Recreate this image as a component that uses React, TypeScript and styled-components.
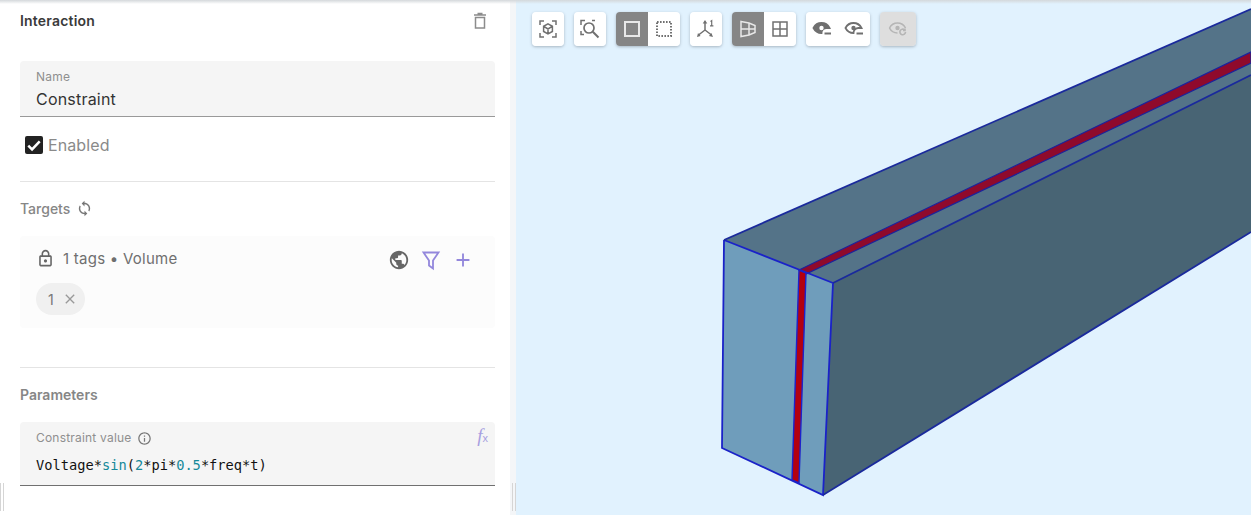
import React from 'react';
import styled, { createGlobalStyle } from 'styled-components';
import { MdAdd, MdClose, MdInfoOutline, MdOutlineLock, MdPublic, MdSync } from 'react-icons/md';

const GlobalStyle = createGlobalStyle`
    html, body {
        margin: 0;
        padding: 0;
        background: #fff;
        font-family: Inter, "Liberation Sans", sans-serif;
    }
`;

const Page = styled.div`
    position: relative;
    display: flex;
    width: 1251px;
    height: 515px;
    overflow: hidden;
`;

const TopShade = styled.div`
    position: absolute;
    top: 0;
    left: 0;
    right: 0;
    height: 4px;
    background: linear-gradient(#d4d8db, rgba(230, 233, 236, 0));
    z-index: 2;
`;

const Panel = styled.aside`
    display: flex;
    flex-direction: column;
    box-sizing: border-box;
    flex: 0 0 510px;
    padding: 0 15px 0 20px;
    background: #fff;
`;

const Gutter = styled.div`
    flex: 0 0 6px;
    background: #f4f6f8;
`;

const Grip = styled.div<{ $left: number }>`
    position: absolute;
    left: ${(p) => p.$left}px;
    top: 483px;
    width: 2px;
    height: 28px;
    border-left: 1px solid #d5d5d5;
    border-right: 1px solid #d5d5d5;
`;

const Header = styled.div`
    display: flex;
    align-items: center;
    justify-content: space-between;
    height: 41px;
    margin-bottom: 20px;
    font-size: 14px;
    font-weight: 600;
    letter-spacing: 0.2px;
    color: #3a3a3a;
    svg {
        width: 18px;
        height: 18px;
        margin-right: 6px;
        color: #8c8c8c;
    }
`;

const Field = styled.div<{ $tall?: boolean }>`
    position: relative;
    box-sizing: border-box;
    height: ${(p) => (p.$tall ? 64 : 56)}px;
    padding: 9px 16px 0;
    background: #f5f5f5;
    border-radius: 4px 4px 0 0;
    border-bottom: 1px solid ${(p) => (p.$tall ? '#707070' : '#999')};
`;

const FieldLabel = styled.div`
    display: flex;
    align-items: center;
    gap: 5px;
    height: 14px;
    font-size: 12px;
    letter-spacing: 0.2px;
    line-height: 14px;
    color: #8f8f8f;
    svg {
        width: 15px;
        height: 15px;
        color: #777;
    }
`;

const NameValue = styled.div`
    margin-top: 5px;
    font-size: 16px;
    letter-spacing: 0.2px;
    line-height: 20px;
    color: #333;
`;

const CheckRow = styled.label`
    display: flex;
    align-items: center;
    gap: 5px;
    height: 18px;
    margin: 19px 0 27px 5px;
    font-size: 16px;
    letter-spacing: 0.1px;
    color: #8a8a8a;
`;

const CheckBox = styled.span`
    display: flex;
    align-items: center;
    justify-content: center;
    width: 18px;
    height: 18px;
    border-radius: 2px;
    background: #222;
    svg {
        width: 16px;
        height: 16px;
    }
`;

const Divider = styled.div`
    height: 1px;
    background: #e4e4e4;
`;

const SectionTitle = styled.div<{ $strong?: boolean }>`
    display: flex;
    align-items: center;
    gap: 6px;
    height: 18px;
    font-size: 14px;
    font-weight: ${(p) => (p.$strong ? 600 : 500)};
    color: #868686;
    svg {
        width: 17px;
        height: 17px;
        color: #777;
    }
`;

const TargetsTitle = styled(SectionTitle)`
    margin: 17px 0 19px;
`;

const ParamsTitle = styled(SectionTitle)`
    margin: 17px 0 19px;
`;

const TargetsBox = styled.div`
    box-sizing: border-box;
    height: 92px;
    padding: 12px 16px 0;
    margin-bottom: 39px;
    background: #fcfcfc;
    border-radius: 4px;
`;

const TargetsRow = styled.div`
    display: flex;
    align-items: center;
    height: 21px;
    font-size: 15px;
    letter-spacing: 0.25px;
    color: #6f6f6f;
`;

const LockIcon = styled(MdOutlineLock)`
    width: 19px;
    height: 19px;
    margin-right: 8px;
    color: #666;
`;

const TargetActions = styled.div`
    display: flex;
    align-items: center;
    gap: 10px;
    margin-left: auto;
    margin-right: 5px;
    transform: translateY(1px);
`;

const ActionSlot = styled.span<{ $accent?: boolean }>`
    display: flex;
    align-items: center;
    justify-content: center;
    width: 22px;
    height: 22px;
    color: ${(p) => (p.$accent ? '#9387dc' : '#666')};
    svg {
        width: 100%;
        height: 100%;
    }
`;

const Chip = styled.div`
    display: inline-flex;
    align-items: center;
    gap: 8px;
    box-sizing: border-box;
    width: 49px;
    height: 32px;
    margin-top: 14px;
    padding-left: 12px;
    border-radius: 16px;
    background: #f0f0f0;
    font-size: 14px;
    color: #777;
    svg {
        width: 16px;
        height: 16px;
        color: #999;
    }
`;

const FxMark = styled.span`
    position: absolute;
    top: 5px;
    right: 7px;
    font-family: "Liberation Serif", serif;
    font-style: italic;
    font-size: 19px;
    line-height: 18px;
    color: #a79fe0;
    sub {
        font-family: "Liberation Sans", sans-serif;
        font-style: normal;
        font-size: 11px;
        vertical-align: baseline;
    }
`;

const CodeLine = styled.div`
    margin-top: 11px;
    font-family: "DejaVu Sans Mono", "Liberation Mono", monospace;
    font-size: 13.7px;
    line-height: 18px;
    color: #111;
    white-space: pre;
`;

const CodeToken = styled.span`
    color: #16899a;
`;

const Viewport = styled.main`
    position: relative;
    flex: 1;
    background: #e1f2fe;
`;

const Scene = styled.svg`
    display: block;
    width: 100%;
    height: 100%;
`;

const Toolbar = styled.div`
    position: absolute;
    top: 12px;
    left: 16px;
    display: flex;
    gap: 10px;
`;

const ToolGroup = styled.div`
    display: flex;
    border-radius: 4px;
    overflow: hidden;
    box-shadow: 0 1px 3px rgba(60, 70, 80, 0.35);
`;

const ToolButton = styled.button<{ $active?: boolean; $off?: boolean; $wide?: boolean }>`
    display: flex;
    align-items: center;
    justify-content: center;
    width: ${(p) => (p.$wide ? 36 : 32)}px;
    height: 34px;
    padding: 0;
    border: 0;
    background: ${(p) => (p.$active ? '#858585' : p.$off ? '#dedede' : '#fff')};
    color: ${(p) => (p.$active ? '#e8e8e8' : p.$off ? '#b5b5b5' : '#707070')};
    svg {
        width: 20px;
        height: 20px;
    }
`;

const line = { fill: 'none', stroke: 'currentColor', strokeWidth: 1.5 };

const Corners = () => (
    <path {...line} d="M2 6V2h4M14 2h4v4M18 14v4h-4M6 18H2v-4" />
);

const ZoomFitIcon = () => (
    <svg viewBox="0 0 20 20">
        <Corners />
        <path {...line} d="M10 4.800l4.400 2.500v5.200L10 15l-4.400-2.500V7.300zM5.800 7.400L10 10l4.200-2.600M10 10v5" />
    </svg>
);

const ZoomSearchIcon = () => (
    <svg viewBox="0 0 20 20">
        <path {...line} d="M1 6V1.500h4M12 1.500h3M1 12v3.500h3" />
        <circle {...line} strokeWidth={1.7} cx="9" cy="9" r="5" />
        <path {...line} strokeWidth={2} d="M12.800 12.800l5.700 5.700" />
    </svg>
);

const SolidBoxIcon = () => (
    <svg viewBox="0 0 20 20">
        <rect {...line} strokeWidth={2} x="3" y="3" width="14" height="14" />
    </svg>
);

const DottedBoxIcon = () => (
    <svg viewBox="0 0 20 20">
        <rect {...line} strokeWidth={2} strokeDasharray="1.600 1.400" x="3" y="3" width="14" height="14" />
    </svg>
);

const AxesIcon = () => (
    <svg viewBox="0 0 20 20">
        <path {...line} d="M9 11V2.500M9 11l-6.500 5M9 11l6.500 5" />
        <path fill="currentColor" d="M9 1l2.300 3.400H6.700zM1 18l1-4 2.600 3zM17 18l-4-1 2.400-3z" />
        <path {...line} strokeWidth={1.2} d="M14.500 2.500l1.200-.8v5M14 6.800h3.400" />
    </svg>
);

const PerspectiveIcon = () => (
    <svg viewBox="0 0 20 20">
        <path {...line} d="M3 2.500l8 1.500 6 2.500v7L11 16l-8 1.500zM11 4v12M3 10h14" />
    </svg>
);

const GridIcon = () => (
    <svg viewBox="0 0 20 20">
        <rect {...line} x="3" y="3" width="14" height="14" />
        <path {...line} d="M10 3v14M3 10h14" />
    </svg>
);

const EyeMinusIcon = ({ solid }: { solid?: boolean }) => (
    <svg viewBox="0 0 20 20">
        <path
            fill={solid ? 'currentColor' : 'none'}
            stroke="currentColor"
            strokeWidth="1.800"
            d="M1.500 9C3.200 5.700 6.200 4 9.500 4s6.300 1.700 8 5h-3a5 5 0 0 0-5 5C6 14 3.200 12.300 1.500 9z"
        />
        <circle cx="9.500" cy="9" r="2.200" fill={solid ? '#fff' : 'currentColor'} />
        <path {...line} strokeWidth={1.8} d="M12.500 14.500h6.500" />
    </svg>
);

const EyeResetIcon = () => (
    <svg viewBox="0 0 20 20">
        <path {...line} strokeWidth={1.6} d="M1.500 9C3.200 5.700 6.200 4 9.500 4s6.300 1.700 8 5M1.500 9c1.700 3.300 4.700 5 8 5" />
        <circle cx="9.500" cy="9" r="2.200" fill="currentColor" />
        <path {...line} strokeWidth={1.6} d="M17.500 13a2.800 2.800 0 1 1-1-2.200M17 9.500v2h-2" />
    </svg>
);

const TrashIcon = () => (
    <svg viewBox="0 0 18 18">
        <path fill="none" stroke="currentColor" strokeWidth="1.500" d="M4.500 5.500h9V16h-9zM3 3h12M6.500 1.500h5" />
    </svg>
);

const FunnelIcon = () => (
    <svg viewBox="0 0 22 22">
        <path fill="none" stroke="currentColor" strokeWidth="1.800" d="M3.500 3.500h15l-5.500 8v8l-4-3v-5z" />
    </svg>
);

const Model = () => (
    <Scene viewBox="516 0 735 515">
        <polygon points="724,240 1251,9 1251,75 833,283" fill="#547388" />
        <polygon points="833,283 1251,75 1251,232 823,495" fill="#486474" />
        <polygon points="724,240 833,283 823,495 722,448" fill="#6f9dbb" />
        <polygon points="799,270 1251,52 1251,63 806,274" fill="#8f0a2c" stroke="#1c239c" strokeWidth="1.200" />
        <polygon points="799,270 806,273 799,483 792,480" fill="#b4000f" stroke="#1c22cc" strokeWidth="1.400" />
        <g fill="none" stroke="#1a22c8" strokeWidth="1.800">
            <path d="M724 240L722 448L823 495L833 283L724 240" />
            <path d="M724 240L1251 9" stroke="#1a2a9c" />
            <path d="M833 283L1251 75" stroke="#1a2a9c" />
            <path d="M823 495L1251 232" stroke="#1a2a9c" />
        </g>
    </Scene>
);

export default function App() {
    return (
        <Page>
            <GlobalStyle />
            <TopShade />
            <Panel>
                <Header>
                    Interaction
                    <TrashIcon />
                </Header>
                <Field>
                    <FieldLabel>Name</FieldLabel>
                    <NameValue>Constraint</NameValue>
                </Field>
                <CheckRow>
                    <CheckBox>
                        <svg viewBox="0 0 14 14">
                            <path fill="none" stroke="#fff" strokeWidth="2.200" d="M2 7.500l3.300 3.300L12 3.800" />
                        </svg>
                    </CheckBox>
                    Enabled
                </CheckRow>
                <Divider />
                <TargetsTitle>
                    Targets
                    <MdSync />
                </TargetsTitle>
                <TargetsBox>
                    <TargetsRow>
                        <LockIcon />
                        1 tags • Volume
                        <TargetActions>
                            <ActionSlot><MdPublic /></ActionSlot>
                            <ActionSlot $accent><FunnelIcon /></ActionSlot>
                            <ActionSlot $accent><MdAdd /></ActionSlot>
                        </TargetActions>
                    </TargetsRow>
                    <Chip>
                        1
                        <MdClose />
                    </Chip>
                </TargetsBox>
                <Divider />
                <ParamsTitle $strong>Parameters</ParamsTitle>
                <Field $tall>
                    <FieldLabel>
                        Constraint value
                        <MdInfoOutline />
                    </FieldLabel>
                    <FxMark>f<sub>x</sub></FxMark>
                    <CodeLine>
                        Voltage*<CodeToken>sin</CodeToken>(<CodeToken>2</CodeToken>*pi*<CodeToken>0.5</CodeToken>*freq*t)
                    </CodeLine>
                </Field>
            </Panel>
            <Gutter />
            <Viewport>
                <Model />
                <Toolbar>
                    <ToolGroup><ToolButton><ZoomFitIcon /></ToolButton></ToolGroup>
                    <ToolGroup><ToolButton><ZoomSearchIcon /></ToolButton></ToolGroup>
                    <ToolGroup>
                        <ToolButton $active><SolidBoxIcon /></ToolButton>
                        <ToolButton><DottedBoxIcon /></ToolButton>
                    </ToolGroup>
                    <ToolGroup><ToolButton><AxesIcon /></ToolButton></ToolGroup>
                    <ToolGroup>
                        <ToolButton $active><PerspectiveIcon /></ToolButton>
                        <ToolButton><GridIcon /></ToolButton>
                    </ToolGroup>
                    <ToolGroup>
                        <ToolButton><EyeMinusIcon solid /></ToolButton>
                        <ToolButton><EyeMinusIcon /></ToolButton>
                    </ToolGroup>
                    <ToolGroup><ToolButton $off $wide><EyeResetIcon /></ToolButton></ToolGroup>
                </Toolbar>
            </Viewport>
            <Grip $left={0} />
            <Grip $left={512} />
        </Page>
    );
}
